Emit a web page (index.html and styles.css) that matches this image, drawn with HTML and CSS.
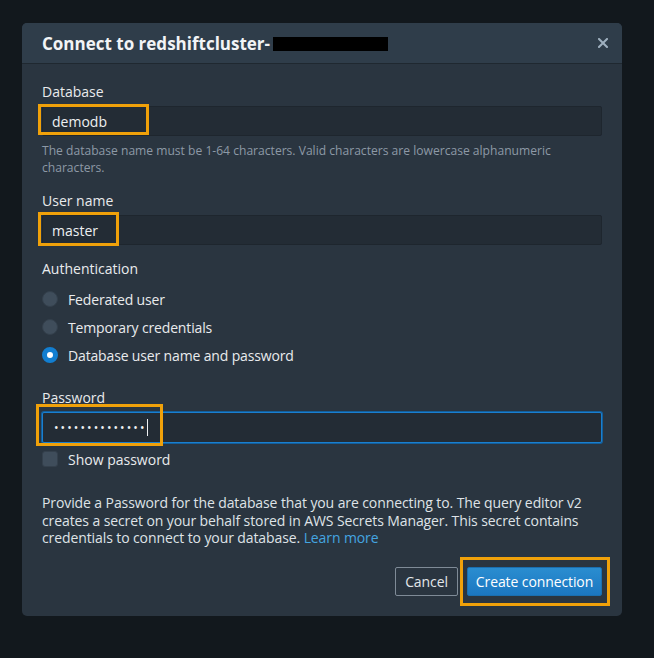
FILE: index.html
```html
<!DOCTYPE html>
<html lang="en">
<head>
<meta charset="utf-8">
<title>Connect</title>
<link rel="stylesheet" href="styles.css">
</head>
<body>
<div class="modal">
  <div class="modal-header">
    <h1 class="title">Connect to redshiftcluster-<span class="redact"></span></h1>
    <button class="close" aria-label="Close">
      <svg width="10" height="10" viewBox="0 0 10 10"><path d="M1 1L9 9M9 1L1 9" stroke="#9fb0bf" stroke-width="2" stroke-linecap="square"/></svg>
    </button>
  </div>
  <div class="modal-body">
    <div class="field">
      <div class="label">Database</div>
      <div class="input-wrap">
        <div class="input">demodb</div>
        <span class="hl hl-db"></span>
      </div>
      <div class="hint">The database name must be 1-64 characters. Valid characters are lowercase alphanumeric characters.</div>
    </div>
    <div class="field field-user">
      <div class="label">User name</div>
      <div class="input-wrap">
        <div class="input">master</div>
        <span class="hl hl-user"></span>
      </div>
    </div>
    <div class="field field-auth">
      <div class="label">Authentication</div>
      <div class="radios">
        <div class="radio-row"><span class="radio"></span>Federated user</div>
        <div class="radio-row"><span class="radio"></span>Temporary credentials</div>
        <div class="radio-row"><span class="radio checked"></span>Database user name and password</div>
      </div>
    </div>
    <div class="field field-pass">
      <div class="label">Password</div>
      <div class="input-wrap">
        <div class="input focused"><span class="dots">••••••••••••••</span><span class="caret"></span></div>
        <span class="hl hl-pass"></span>
      </div>
      <div class="check-row"><span class="checkbox"></span>Show password</div>
    </div>
    <div class="desc"><span>Provide a Password for the database that you are connecting to. The query editor v2 creates a secret on your behalf stored in AWS Secrets Manager. This secret contains credentials to connect to your database.</span> <a class="link" href="#">Learn more</a></div>
    <div class="actions">
      <button class="btn btn-cancel">Cancel</button>
      <div class="btn-wrap">
        <button class="btn btn-primary">Create connection</button>
        <span class="hl hl-btn"></span>
      </div>
    </div>
  </div>
</div>
</body>
</html>
```
FILE: styles.css
```css
html, body {
  margin: 0;
  padding: 0;
}
body {
  width: 654px;
  height: 658px;
  background: #12181d;
  font-family: "Open Sans", "Noto Sans", Arial, sans-serif;
  color: #e9ebed;
  overflow: hidden;
}
.modal {
  margin: 23px 0 0 22px;
  width: 600px;
  height: 593px;
  background: #2a3540;
  border-radius: 5px;
  overflow: hidden;
  display: flex;
  flex-direction: column;
}
.modal-header {
  height: 40px;
  background: #2f3d4a;
  border-bottom: 1px solid #1f2830;
  display: flex;
  align-items: center;
  justify-content: space-between;
  padding: 0 14px 0 20px;
  flex-shrink: 0;
}
.title {
  margin: 0;
  font-size: 17px;
  font-weight: 700;
  color: #f2f4f6;
  display: flex;
  align-items: center;
}
.redact {
  display: inline-block;
  width: 115px;
  height: 14px;
  background: #000;
  margin-top: 1px;
  margin-left: 3px;
}
.close {
  background: none;
  border: 0;
  padding: 0;
  width: 10px;
  height: 10px;
  display: flex;
}
.modal-body {
  padding: 18px 20px 0 20px;
  display: flex;
  flex-direction: column;
}
.label {
  font-size: 14px;
  line-height: 20px;
  color: #e9ebed;
}
.input-wrap {
  position: relative;
  margin-top: 4px;
}
.input {
  height: 30px;
  box-sizing: border-box;
  background: #232c35;
  border: 1px solid #1e262e;
  border-radius: 2px;
  padding: 0 9px;
  display: flex;
  align-items: center;
  font-size: 14px;
  color: #eef0f2;
}
.input.focused {
  height: 31px;
  border: 1px solid #1a7fcf;
  box-shadow: 0 0 0 1px #135f9c;
}
.dots {
  font-size: 12px;
  letter-spacing: 2.1px;
  padding-left: 2px;
}
.caret {
  display: inline-block;
  width: 1px;
  height: 17px;
  background: #eef0f2;
  margin-left: 0;
}
.hint {
  margin-top: 6px;
  font-size: 12.1px;
  line-height: 17px;
  color: #8d99a6;
}
.field-user {
  margin-top: 15px;
}
.field-auth {
  margin-top: 14px;
}
.radios {
  margin-top: 6px;
  display: flex;
  flex-direction: column;
}
.radio-row {
  height: 28px;
  display: flex;
  align-items: center;
  font-size: 14px;
  letter-spacing: -0.15px;
  color: #e9ebed;
}
.radio {
  width: 16px;
  height: 16px;
  box-sizing: border-box;
  border-radius: 50%;
  background: #3f4d5b;
  border: 1px solid #34404c;
  margin-right: 10px;
}
.radio.checked {
  border: 5px solid #127ed0;
  background: #fff;
}
.field-pass {
  margin-top: 19px;
}
.check-row {
  margin-top: 8px;
  display: flex;
  align-items: center;
  font-size: 14px;
  height: 16px;
  color: #e9ebed;
}
.checkbox {
  width: 16px;
  height: 16px;
  box-sizing: border-box;
  border-radius: 3px;
  background: #3f4d5b;
  border: 1px solid #34404c;
  margin-right: 10px;
}
.desc {
  margin: 27px 0 0 0;
  font-size: 14px;
  line-height: 17.5px;
  letter-spacing: -0.1px;
  color: #dfe3e7;
}
.link {
  color: #44a5e0;
  text-decoration: none;
}
.actions {
  margin-top: 20px;
  display: flex;
  justify-content: flex-end;
  gap: 9px;
}
.btn {
  height: 29px;
  box-sizing: border-box;
  border-radius: 2px;
  font-family: inherit;
  font-size: 14px;
  padding: 0;
  white-space: nowrap;
  letter-spacing: -0.1px;
}
.btn-cancel {
  background: transparent;
  border: 1px solid #7f8b97;
  color: #e3e7ea;
  width: 63px;
}
.btn-wrap {
  position: relative;
  display: flex;
}
.btn-primary {
  background: linear-gradient(#2a8dd0, #1b77c1);
  border: 1px solid #1a6fb0;
  color: #fff;
  width: 135px;
}
.hl {
  position: absolute;
  box-sizing: border-box;
  border: 3px solid #f0a10a;
  pointer-events: none;
}
.hl-db {
  left: -4px;
  top: -2px;
  width: 111px;
  height: 31px;
}
.hl-user {
  left: -4px;
  top: -3px;
  width: 81px;
  height: 34px;
}
.hl-pass {
  left: -6px;
  top: -8px;
  width: 127px;
  height: 42px;
}
.hl-btn {
  left: -7px;
  top: -10px;
  width: 150px;
  height: 49px;
}
```
